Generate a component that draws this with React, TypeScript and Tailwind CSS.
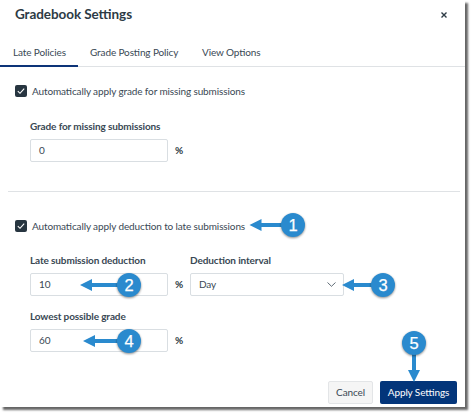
import type { ReactNode } from "react";

function Checkbox({ label }: { label: string }) {
  return (
    <label className="flex h-3 items-center">
      <span className="flex h-3 w-3 items-center justify-center rounded-[2px] bg-[#273540]">
        <svg width="8" height="8" viewBox="0 0 8 8" fill="none">
          <path d="M0.8 4.2 L3 6.3 L7.2 1.6" stroke="#fff" strokeWidth="1.1" />
        </svg>
      </span>
      <span className="ml-[5px] whitespace-nowrap leading-3">{label}</span>
    </label>
  );
}

function Field({ label, children }: { label: string; children: ReactNode }) {
  return (
    <div>
      <div className="h-3 whitespace-nowrap font-bold leading-3">{label}</div>
      <div className="mt-[7px] flex h-[23px] items-center">{children}</div>
    </div>
  );
}

function NumberBox({ value }: { value: string }) {
  return (
    <>
      <div className="flex h-[23px] w-[138px] items-center rounded-[2px] border border-[#d9dee2] pl-[8px]">
        {value}
      </div>
      <span className="ml-[7px] font-bold text-[#2d3b45]">%</span>
    </>
  );
}

// Numbered callout, the arrow goes from the circle to the tip
function Callout({ n, x, y, tipX, tipY }: { n: number; x: number; y: number; tipX: number; tipY: number }) {
  const down = tipY !== y;
  const head = down
    ? `${tipX},${tipY} ${tipX - 6},${tipY - 12} ${tipX + 6},${tipY - 12}`
    : `${tipX},${tipY} ${tipX + 12},${tipY - 6} ${tipX + 12},${tipY + 6}`;
  return (
    <g>
      <line
        x1={x}
        y1={y}
        x2={down ? tipX : tipX + 11}
        y2={down ? tipY - 11 : tipY}
        stroke="#2a8ace"
        strokeWidth="4"
      />
      <polygon points={head} fill="#2a8ace" />
      <circle cx={x} cy={y} r="12" fill="#2a8ace" className="drop-shadow-[0_1px_1px_rgba(0,0,0,0.45)]" />
      <text
        x={x}
        y={y + 5.7}
        textAnchor="middle"
        fill="#fff"
        className="font-['Liberation_Sans',sans-serif] text-[16.5px] tracking-normal"
        stroke="#fff"
        strokeWidth="0.25"
      >
        {n}
      </text>
    </g>
  );
}

export default function App() {
  return (
    <div className="relative h-[417px] w-[474px] overflow-hidden bg-white font-['Lato',sans-serif] text-[10px] tracking-[-0.12px] text-[#394854] [font-feature-settings:'liga'_1]">
      <div className="flex h-[407px] w-[465px] flex-col bg-white shadow-[3px_3px_2px_0_rgba(0,0,0,0.6)]">
        <div className="flex h-7 items-center justify-between pl-[15px] pr-[18px]">
          <h1 className="text-[13.5px] font-bold leading-4 tracking-[-0.08px] text-[#2d3b45]">Gradebook Settings</h1>
          <svg width="6" height="6" viewBox="0 0 6 6" className="mt-px">
            <path d="M0.5 0.5 L5.5 5.5 M5.5 0.5 L0.5 5.5" stroke="#2d3b45" strokeWidth="1.4" />
          </svg>
        </div>

        <div className="mt-[9px] flex h-[30px] border-b border-[#dfe2e5] leading-[30px]">
          <div className="h-[30px] w-[78px] border-b-2 border-[#0d3478] pl-[13px]">Late Policies</div>
          <div className="w-[124px] pl-3">Grade Posting Policy</div>
          <div>View Options</div>
        </div>

        <div className="mt-[18px] pl-[15px]">
          <Checkbox label="Automatically apply grade for missing submissions" />
          <div className="mt-[23px] pl-[15px]">
            <Field label="Grade for missing submissions">
              <NumberBox value="0" />
            </Field>
          </div>
        </div>

        <div className="ml-2 mr-[5px] mt-[29px] h-px bg-[#dfe2e5]" />

        <div className="mt-[28px] pl-[15px]">
          <Checkbox label="Automatically apply deduction to late submissions" />
          <div className="mt-[22px] flex pl-[15px]">
            <div className="w-[160px]">
              <Field label="Late submission deduction">
                <NumberBox value="10" />
              </Field>
            </div>
            <Field label="Deduction interval">
              <div className="flex h-[23px] w-[154px] items-center justify-between rounded-[2px] border border-[#d9dee2] pl-[8px] pr-[7px]">
                Day
                <svg width="9" height="5" viewBox="0 0 9 5" fill="none">
                  <path d="M0.5 0.5 L4.5 4.3 L8.5 0.5" stroke="#394854" strokeWidth="0.8" />
                </svg>
              </div>
            </Field>
          </div>
          <div className="mt-[14px] pl-[15px]">
            <Field label="Lowest possible grade">
              <NumberBox value="60" />
            </Field>
          </div>
        </div>

        <div className="mt-[29px] flex justify-end gap-[7px] pr-2">
          <button className="h-[23px] w-[45px] rounded-[2px] border border-[#e3e5e7] bg-[#f5f5f5]">Cancel</button>
          <button className="h-[23px] w-[77px] whitespace-nowrap rounded-[2px] bg-[#03357a] text-white">
            Apply Settings
          </button>
        </div>
      </div>

      <svg width="474" height="417" className="pointer-events-none absolute left-0 top-0">
        <Callout n={1} x={293} y={225} tipX={249.5} tipY={225} />
        <Callout n={2} x={129} y={285} tipX={80} tipY={285} />
        <Callout n={3} x={383} y={285} tipX={342} tipY={285} />
        <Callout n={4} x={129} y={341} tipX={83} tipY={341} />
        <Callout n={5} x={414} y={343} tipX={414} tipY={382} />
      </svg>
    </div>
  );
}
